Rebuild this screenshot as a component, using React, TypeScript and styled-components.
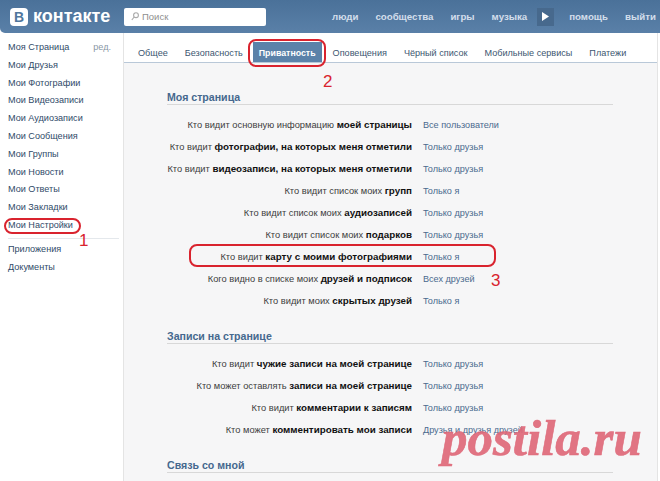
import React from 'react';
import styled, { createGlobalStyle } from 'styled-components';

const GlobalStyle = createGlobalStyle`
    html, body {
        margin: 0;
        padding: 0;
        background: #ffffff;
    }
    body {
        width: 660px;
        height: 481px;
        overflow: hidden;
        font-family: 'Liberation Sans', Arial, sans-serif;
        font-size: 9.1px;
        color: #2b2b2b;
    }
`;

const Page = styled.div`
    width: 660px;
    height: 481px;
    overflow: hidden;
    position: relative;
    background: #ffffff;
`;

const Header = styled.header`
    height: 33px;
    display: flex;
    align-items: center;
    background: linear-gradient(#4a7199, #5a80a8);
    border-bottom-left-radius: 5px;
`;

const Logo = styled.div`
    width: 124px;
    display: flex;
    align-items: center;
    padding-left: 10px;
    box-sizing: border-box;
    gap: 5px;
`;

const LogoBadge = styled.span`
    width: 18px;
    height: 18px;
    border-radius: 4px;
    background: #ffffff;
    color: #4f769d;
    display: flex;
    align-items: center;
    justify-content: center;
    font-size: 14px;
    font-weight: 700;
`;

const LogoText = styled.span`
    color: #ffffff;
    font-size: 18px;
    font-weight: 700;
`;

const Search = styled.div`
    width: 142px;
    height: 18px;
    background: #ffffff;
    border-radius: 2px;
    display: flex;
    align-items: center;
    gap: 3px;
    padding-left: 7px;
    box-sizing: border-box;
    color: #8f8f8f;
    font-size: 9.5px;
`;

const TopNav = styled.nav`
    display: flex;
    align-items: center;
    margin-left: 66px;
    gap: 17px;
`;

const TopLink = styled.span`
    color: #d3deeb;
    font-weight: 700;
    font-size: 9.7px;
`;

const PlayBox = styled.span`
    width: 17px;
    height: 18px;
    background: #47698d;
    display: flex;
    align-items: center;
    justify-content: center;
    margin: 0 -2px 0 -7px;
`;

const Body = styled.div`
    display: flex;
    height: 448px;
`;

const Sidebar = styled.aside`
    width: 123px;
    box-sizing: border-box;
    padding: 6px 4px 0 8px;
    display: flex;
    flex-direction: column;
    color: #2f4a68;
`;

const SideItem = styled.div`
    height: 17.8px;
    line-height: 17.8px;
    display: flex;
    justify-content: space-between;
    padding-right: 8px;
    white-space: nowrap;
`;

const SideEdit = styled.span`
    color: #8a97a6;
`;

const SideDivider = styled.div`
    height: 1px;
    background: #e4e8ec;
    margin: 3px 0 2px;
`;

const Main = styled.main`
    flex: 1;
    background: #f6f6f7;
    border-left: 1px solid #e4e4e4;
    border-right: 1px solid #e4e4e4;
    margin-right: 2px;
    min-width: 0;
`;

const Tabs = styled.div`
    height: 30px;
    background: #ffffff;
    border-bottom: 1px solid #b9c8d8;
    display: flex;
    align-items: flex-end;
    padding-left: 14px;
    gap: 17px;
    box-sizing: border-box;
`;

const Tab = styled.span<{ $active?: boolean }>`
    color: ${p => (p.$active ? '#ffffff' : '#3c5670')};
    background: ${p => (p.$active ? '#5b82a9' : 'transparent')};
    font-weight: ${p => (p.$active ? 700 : 400)};
    font-size: ${p => (p.$active ? '8.8px' : '9.1px')};
    padding: ${p => (p.$active ? '0 6px' : '0')};
    margin: ${p => (p.$active ? '0 -6px 0 -7px' : '0')};
    height: 20px;
    line-height: 22px;
    white-space: nowrap;
`;

const Content = styled.div`
    padding: 27px 0 0 43px;
    width: 446px;
`;

const SectionTitle = styled.h2`
    margin: 0 0 10px;
    font-size: 10.6px;
    font-weight: 700;
    color: #45688e;
    height: 14px;
    line-height: 14px;
    border-bottom: 1px solid #d8d8d8;
`;

const Section = styled.section`
    margin-bottom: 16px;
`;

const Row = styled.div`
    height: 22px;
    line-height: 20px;
    display: flex;
    white-space: nowrap;
`;

const RowLabel = styled.div`
    width: 245px;
    flex: none;
    display: flex;
    justify-content: flex-end;
    white-space: pre;
    color: #3d3d3d;
    font-size: 9.3px;
    b {
        color: #111111;
        font-size: 9.8px;
    }
`;

const RowValue = styled.div`
    margin-left: 11px;
    color: #4a6a8e;
`;

const RingBase = styled.div`
    position: absolute;
    border: 2px solid #d9232e;
    box-sizing: border-box;
    border-radius: 8px;
`;

const SideRing = styled(RingBase)`
    left: 4px;
    top: 218px;
    width: 77px;
    height: 16px;
`;

const TabRing = styled(RingBase)`
    left: 248px;
    top: 39px;
    width: 78px;
    height: 28px;
`;

const RowRing = styled(RingBase)`
    left: 189px;
    top: 244px;
    width: 307px;
    height: 23px;
`;

const Marker = styled.span<{ $x: number; $y: number }>`
    position: absolute;
    left: ${p => p.$x}px;
    top: ${p => p.$y}px;
    color: #d9232e;
    font-size: 17px;
    line-height: 18px;
`;

const Watermark = styled.div`
    position: absolute;
    left: 442px;
    top: 408px;
    font-family: 'Liberation Serif', serif;
    font-style: italic;
    font-weight: 700;
    font-size: 51px;
    line-height: 60px;
    color: rgba(222, 104, 120, 0.92);
    -webkit-text-stroke: 0.6px rgba(222, 104, 120, 0.92);
    white-space: nowrap;
`;

const sections = [
    {
        title: 'Моя страница',
        rows: [
            ['Кто видит основную информацию ', 'моей страницы', 'Все пользователи'],
            ['Кто видит ', 'фотографии, на которых меня отметили', 'Только друзья'],
            ['Кто видит ', 'видеозаписи, на которых меня отметили', 'Только друзья'],
            ['Кто видит список моих ', 'групп', 'Только я'],
            ['Кто видит список моих ', 'аудиозаписей', 'Только друзья'],
            ['Кто видит список моих ', 'подарков', 'Только друзья'],
            ['Кто видит ', 'карту с моими фотографиями', 'Только я'],
            ['Кого видно в списке моих ', 'друзей и подписок', 'Всех друзей'],
            ['Кто видит моих ', 'скрытых друзей', 'Только я'],
        ],
    },
    {
        title: 'Записи на странице',
        rows: [
            ['Кто видит ', 'чужие записи на моей странице', 'Только друзья'],
            ['Кто может оставлять ', 'записи на моей странице', 'Только друзья'],
            ['Кто видит ', 'комментарии к записям', 'Только друзья'],
            ['Кто может ', 'комментировать мои записи', 'Друзья и друзья друзей'],
        ],
    },
    { title: 'Связь со мной', rows: [] },
];

const sideTop = ['Мои Друзья', 'Мои Фотографии', 'Мои Видеозаписи', 'Мои Аудиозаписи', 'Мои Сообщения', 'Мои Группы', 'Мои Новости', 'Мои Ответы', 'Мои Закладки', 'Мои Настройки'];

const App: React.FC = () => (
    <Page>
        <GlobalStyle />
        <Header>
            <Logo>
                <LogoBadge>В</LogoBadge>
                <LogoText>контакте</LogoText>
            </Logo>
            <Search>
                <svg width="8" height="9" viewBox="0 0 8 9" fill="none" stroke="#a9a9a9" strokeWidth="1.1">
                    <circle cx="5" cy="3.2" r="2.4" />
                    <path d="M3.2 5L0.8 8" />
                </svg>
                Поиск
            </Search>
            <TopNav>
                <TopLink>люди</TopLink>
                <TopLink>сообщества</TopLink>
                <TopLink>игры</TopLink>
                <TopLink>музыка</TopLink>
                <PlayBox>
                    <svg width="7" height="9" viewBox="0 0 7 9"><path d="M0 0l7 4.5L0 9z" fill="#fff" /></svg>
                </PlayBox>
                <TopLink>помощь</TopLink>
                <TopLink>выйти</TopLink>
            </TopNav>
        </Header>
        <Body>
            <Sidebar>
                <SideItem>Моя Страница<SideEdit>ред.</SideEdit></SideItem>
                {sideTop.map(item => <SideItem key={item}>{item}</SideItem>)}
                <SideDivider />
                <SideItem>Приложения</SideItem>
                <SideItem>Документы</SideItem>
            </Sidebar>
            <Main>
                <Tabs>
                    <Tab>Общее</Tab>
                    <Tab>Безопасность</Tab>
                    <Tab $active>Приватность</Tab>
                    <Tab>Оповещения</Tab>
                    <Tab>Чёрный список</Tab>
                    <Tab>Мобильные сервисы</Tab>
                    <Tab>Платежи</Tab>
                </Tabs>
                <Content>
                    {sections.map(s => (
                        <Section key={s.title}>
                            <SectionTitle>{s.title}</SectionTitle>
                            {s.rows.map(r => (
                                <Row key={r[1]}>
                                    <RowLabel>{r[0]}<b>{r[1]}</b></RowLabel>
                                    <RowValue>{r[2]}</RowValue>
                                </Row>
                            ))}
                        </Section>
                    ))}
                </Content>
            </Main>
        </Body>
        <SideRing />
        <TabRing />
        <RowRing />
        <Marker $x={79} $y={232}>1</Marker>
        <Marker $x={323} $y={73}>2</Marker>
        <Marker $x={491} $y={272}>3</Marker>
        <Watermark>postila.ru</Watermark>
    </Page>
);

export default App;
